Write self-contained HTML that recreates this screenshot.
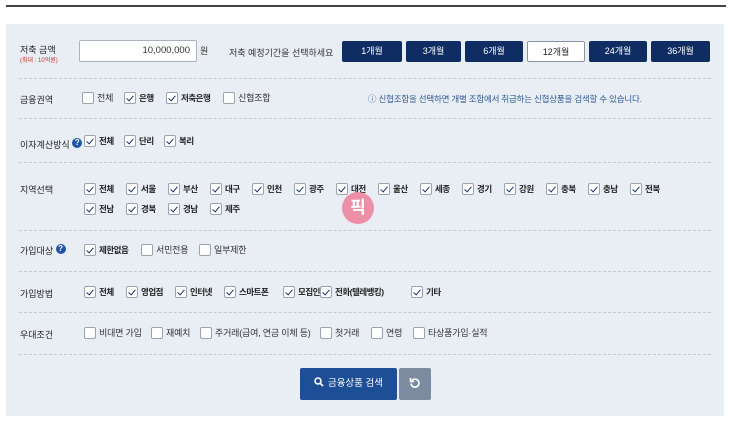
<!DOCTYPE html>
<html><head><meta charset="utf-8"><style>
*{margin:0;padding:0;box-sizing:border-box}
body{width:730px;height:424px;background:#fff;position:relative;overflow:hidden;font-family:"Liberation Sans","Noto Sans CJK KR",sans-serif;font-size:9px;color:#333}
.top{position:absolute;left:6px;top:5px;width:720px;height:2px;background:#444}
.panel{position:absolute;left:6px;top:24px;width:718px;height:392px;background:#e9eef5}
.a{position:absolute;white-space:nowrap}
.dash{position:absolute;left:19px;width:692px;border-top:1px dashed #c3c9d2}
.lbl{position:absolute;left:20px;font-size:9px;color:#222}
.cb{position:absolute;white-space:nowrap;font-size:9px;line-height:12px;color:#333;letter-spacing:-0.2px}
.cb i{display:inline-block;width:12px;height:12px;border:1px solid #9aa3ae;background:#fff;border-radius:2px;vertical-align:top;margin-right:3px;position:relative}
.cb.on{font-weight:bold;color:#222;font-size:8.5px;letter-spacing:-0.5px}
.cb.on i::after{content:"";position:absolute;left:3px;top:1px;width:3px;height:6px;border:solid #1b2f6b;border-width:0 1.3px 1.3px 0;transform:rotate(40deg)}
.pb{position:absolute;top:41px;height:21px;background:#0f2d63;color:#fff;font-size:9px;text-align:center;line-height:21px;border-radius:2px}
.pb.w{background:#fff;color:#222;border:1px solid #8a93a0}
.q{display:inline-block;width:10px;height:10px;border-radius:50%;background:#1f56a8;color:#fff;font-size:8px;line-height:10px;text-align:center;font-weight:bold;vertical-align:top}
</style></head><body>
<div class="top"></div>
<div class="panel"></div>
<div class="lbl" style="top:43px">저축 금액</div>
<div class="a" style="left:20px;top:55px;font-size:6px;color:#c0392b">(최대 : 10억원)</div>
<div class="a" style="left:79px;top:40px;width:118px;height:22px;background:#fff;border:1px solid #aab2bd;border-radius:2px;text-align:right;padding-right:6px;line-height:20px;font-size:9.5px">10,000,000</div>
<div class="a" style="left:200px;top:44px">원</div>
<div class="a" style="left:229px;top:46px">저축 예정기간을 선택하세요</div>
<div class="pb" style="left:342px;width:60px">1개월</div>
<div class="pb" style="left:406px;width:55px">3개월</div>
<div class="pb" style="left:465px;width:58px">6개월</div>
<div class="pb w" style="left:527px;width:58px">12개월</div>
<div class="pb" style="left:589px;width:58px">24개월</div>
<div class="pb" style="left:651px;width:59px">36개월</div>
<div class="dash" style="top:78px"></div>
<div class="lbl" style="top:93px">금융권역</div>
<div class="cb" style="left:82px;top:92px"><i></i>전체</div>
<div class="cb on" style="left:124px;top:92px"><i></i>은행</div>
<div class="cb on" style="left:166px;top:92px"><i></i>저축은행</div>
<div class="cb" style="left:223px;top:92px"><i></i>신협조합</div>
<div class="a" style="left:368px;top:93px;color:#2f5a94;font-size:8.5px;letter-spacing:-0.2px">ⓘ 신협조합을 선택하면 개별 조합에서 취급하는 신협상품을 검색할 수 있습니다.</div>
<div class="dash" style="top:118px"></div>
<div class="lbl" style="top:138px">이자계산방식 <span class="q">?</span></div>
<div class="cb on" style="left:84px;top:135px"><i></i>전체</div>
<div class="cb on" style="left:124px;top:135px"><i></i>단리</div>
<div class="cb on" style="left:164px;top:135px"><i></i>복리</div>
<div class="dash" style="top:162px"></div>
<div class="lbl" style="top:183px">지역선택</div>
<div class="cb on" style="left:84px;top:183px"><i></i>전체</div>
<div class="cb on" style="left:126px;top:183px"><i></i>서울</div>
<div class="cb on" style="left:168px;top:183px"><i></i>부산</div>
<div class="cb on" style="left:210px;top:183px"><i></i>대구</div>
<div class="cb on" style="left:252px;top:183px"><i></i>인천</div>
<div class="cb on" style="left:294px;top:183px"><i></i>광주</div>
<div class="cb on" style="left:336px;top:183px"><i></i>대전</div>
<div class="cb on" style="left:378px;top:183px"><i></i>울산</div>
<div class="cb on" style="left:420px;top:183px"><i></i>세종</div>
<div class="cb on" style="left:462px;top:183px"><i></i>경기</div>
<div class="cb on" style="left:504px;top:183px"><i></i>강원</div>
<div class="cb on" style="left:546px;top:183px"><i></i>충북</div>
<div class="cb on" style="left:588px;top:183px"><i></i>충남</div>
<div class="cb on" style="left:630px;top:183px"><i></i>전북</div>
<div class="cb on" style="left:84px;top:203px"><i></i>전남</div>
<div class="cb on" style="left:126px;top:203px"><i></i>경북</div>
<div class="cb on" style="left:168px;top:203px"><i></i>경남</div>
<div class="cb on" style="left:210px;top:203px"><i></i>제주</div>
<div class="a" style="left:342px;top:192px;width:32px;height:32px;border-radius:50%;background:#ee8fa8;color:#fff;font-weight:bold;font-size:17px;text-align:center;line-height:32px">픽</div>
<div class="dash" style="top:230px"></div>
<div class="lbl" style="top:244px">가입대상 <span class="q">?</span></div>
<div class="cb on" style="left:84px;top:244px"><i></i>제한없음</div>
<div class="cb" style="left:141px;top:244px"><i></i>서민전용</div>
<div class="cb" style="left:199px;top:244px"><i></i>일부제한</div>
<div class="dash" style="top:271px"></div>
<div class="lbl" style="top:287px">가입방법</div>
<div class="cb on" style="left:84px;top:286px"><i></i>전체</div>
<div class="cb on" style="left:126px;top:286px"><i></i>영업점</div>
<div class="cb on" style="left:175px;top:286px"><i></i>인터넷</div>
<div class="cb on" style="left:224px;top:286px"><i></i>스마트폰</div>
<div class="cb on" style="left:283px;top:286px"><i></i>모집인</div>
<div class="cb on" style="left:320px;top:286px"><i></i>전화(텔레뱅킹)</div>
<div class="cb on" style="left:411px;top:286px"><i></i>기타</div>
<div class="dash" style="top:312px"></div>
<div class="lbl" style="top:328px">우대조건</div>
<div class="cb" style="left:84px;top:327px"><i></i>비대면 가입</div>
<div class="cb" style="left:151px;top:327px"><i></i>재예치</div>
<div class="cb" style="left:200px;top:327px"><i></i>주거래(급여, 연금 이체 등)</div>
<div class="cb" style="left:320px;top:327px"><i></i>첫거래</div>
<div class="cb" style="left:371px;top:327px"><i></i>연령</div>
<div class="cb" style="left:413px;top:327px"><i></i>타상품가입·실적</div>
<div class="dash" style="top:354px"></div>
<div class="a" style="left:300px;top:368px;width:97px;height:32px;background:#1e4e96;color:#fff;border-radius:2px;line-height:32px;text-align:center;font-size:9.5px">
<svg width="10" height="10" viewBox="0 0 10 10" style="vertical-align:-1px;margin-right:4px"><circle cx="4" cy="4" r="3" fill="none" stroke="#fff" stroke-width="1.6"/><path d="M6.2 6.2L9 9" stroke="#fff" stroke-width="1.8"/></svg>금융상품 검색</div>
<div class="a" style="left:399px;top:368px;width:32px;height:32px;background:#7c8ba0;border-radius:2px">
<svg width="12" height="12" viewBox="0 0 12 12" style="position:absolute;left:10px;top:9px"><path d="M3 3.5A4 4 0 1 1 2 6.5" fill="none" stroke="#fff" stroke-width="1.6"/><path d="M1.5 1v3.5H5" fill="none" stroke="#fff" stroke-width="1.6"/></svg></div>
</body></html>
